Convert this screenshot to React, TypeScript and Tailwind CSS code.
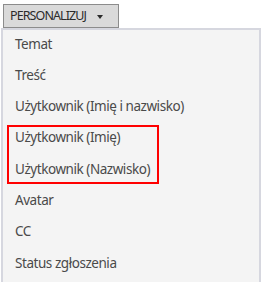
import { useState } from "react"

const FIELDS = [
  "Temat",
  "Treść",
  "Użytkownik (Imię i nazwisko)",
  "Użytkownik (Imię)",
  "Użytkownik (Nazwisko)",
  "Avatar",
  "CC",
  "Status zgłoszenia",
]

export default function App() {
  const [open, setOpen] = useState(true)

  return (
    <div
      className="relative h-[282px] w-[263px] overflow-hidden bg-white"
      style={{ fontFamily: '"Noto Sans", "Open Sans", sans-serif' }}
    >
      {/* Trigger */}
      <button
        onClick={() => setOpen(!open)}
        className="ml-[3px] mt-[4px] flex h-[24px] w-[116px] items-center gap-[11px] border border-[#8c8c8c] bg-[#dadada] pl-[6px] text-[12.5px] leading-none tracking-[-0.9px] text-[#2b2b2b]"
      >
        <span>PERSONALIZUJ</span>
        <span className="mt-[1px] h-0 w-0 border-x-[3px] border-t-[4px] border-x-transparent border-t-[#2b2b2b]" />
      </button>

      {/* Menu */}
      {open && (
        <div className="ml-[1px] h-[260px] w-[260px] border-x-2 border-t-2 border-[#d6d7df] bg-[#f4f4f4]">
          <ul className="-mt-[2px]">
            {FIELDS.map((f) => (
              <li
                key={f}
                className="flex h-[31.3px] items-center pl-[12px] text-[13.5px] tracking-[-0.45px] text-[#4a4a4a]"
              >
                {f}
              </li>
            ))}
          </ul>
        </div>
      )}

      {/* highlight */}
      <div className="pointer-events-none absolute left-[7px] top-[125px] h-[59px] w-[152px] border-2 border-[#ff0000]" />
    </div>
  )
}
